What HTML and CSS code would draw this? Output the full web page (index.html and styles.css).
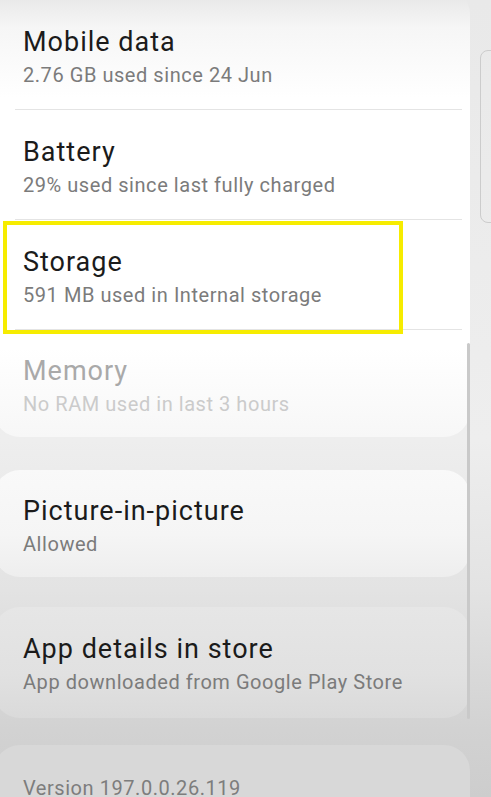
FILE: index.html
```html
<!DOCTYPE html>
<html lang="en">
<head>
<meta charset="utf-8">
<title>App info</title>
<link rel="stylesheet" href="styles.css">
</head>
<body>
<div class="screen">
  <div class="list">
    <section class="card card-main">
      <div class="row divided">
        <div class="title">Mobile data</div>
        <div class="sub">2.76 GB used since 24 Jun</div>
      </div>
      <div class="row divided">
        <div class="title">Battery</div>
        <div class="sub">29% used since last fully charged</div>
      </div>
      <div class="row divided">
        <div class="title">Storage</div>
        <div class="sub">591 MB used in Internal storage</div>
      </div>
      <div class="row row-last disabled">
        <div class="title">Memory</div>
        <div class="sub">No RAM used in last 3 hours</div>
      </div>
    </section>
    <section class="card card-pip">
      <div class="row">
        <div class="title">Picture-in-picture</div>
        <div class="sub">Allowed</div>
      </div>
    </section>
    <section class="card card-store">
      <div class="row">
        <div class="title">App details in store</div>
        <div class="sub">App downloaded from Google Play Store</div>
      </div>
    </section>
    <section class="card card-version">
      <div class="version">Version 197.0.0.26.119</div>
    </section>
  </div>
  <div class="highlight"></div>
  <div class="scrollbar"></div>
  <div class="edge"></div>
</div>
</body>
</html>
```
FILE: styles.css
```css
html, body {
  margin: 0;
  padding: 0;
}
body {
  width: 491px;
  height: 797px;
  overflow: hidden;
  font-family: Roboto, "Noto Sans", "Liberation Sans", sans-serif;
  background: linear-gradient(180deg, #e9e9e9 0px, #eeeeee 440px, #e3e3e3 590px, #d2d2d2 730px, #cdcdcd 797px);
}
.screen {
  position: relative;
  width: 491px;
  height: 797px;
  overflow: hidden;
}
.list {
  display: flex;
  flex-direction: column;
  width: 476px;
  margin-left: -6px;
}
.card {
  border-radius: 26px;
  box-sizing: border-box;
}
.card-main {
  margin-top: -12px;
  padding-top: 12px;
  background: linear-gradient(180deg, #e4e4e4 0px, #f6f6f6 40px, #ffffff 110px, #ffffff 360px, #f7f7f7 449px);
}
.card-pip {
  margin-top: 33px;
  height: 107px;
  background: linear-gradient(180deg, #f9f9f9 0%, #f5f5f5 60%, #eeeeee 100%);
}
.card-store {
  margin-top: 30px;
  height: 111px;
  background: linear-gradient(180deg, #e6e6e6 0%, #e1e1e1 60%, #dadada 100%);
}
.card-version {
  margin-top: 27px;
  height: 80px;
  background: #d8d8d8;
}
.row {
  position: relative;
  box-sizing: border-box;
  height: 110px;
  padding: 27px 0 0 29px;
}
.row-last {
  height: 107px;
  padding-top: 26px;
}
.card-pip .row {
  height: 107px;
  padding-top: 26px;
}
.card-store .row {
  height: 111px;
  padding-top: 27px;
}
.divided::after {
  content: "";
  position: absolute;
  left: 21px;
  right: 8px;
  bottom: 0;
  height: 1px;
  background: #e4e4e4;
}
.title {
  font-size: 27px;
  line-height: 30px;
  letter-spacing: 1px;
  color: #1b1b1b;
  white-space: nowrap;
}
.sub {
  margin-top: 6px;
  font-size: 20px;
  line-height: 24px;
  letter-spacing: 0.55px;
  color: #7b7b7b;
  white-space: nowrap;
}
.disabled .title {
  color: #a9a9a9;
}
.disabled .sub {
  color: #cbcbcb;
}
.version {
  padding: 31px 0 0 29px;
  font-size: 20px;
  line-height: 24px;
  letter-spacing: 0.55px;
  color: #7d7d7d;
  white-space: nowrap;
}
.highlight {
  position: absolute;
  left: 3px;
  top: 221px;
  width: 400px;
  height: 113px;
  box-sizing: border-box;
  border: 4.5px solid #f6ec00;
}
.scrollbar {
  position: absolute;
  left: 467px;
  top: 343px;
  width: 3px;
  height: 376px;
  border-radius: 2px;
  background: #c9c9c9;
}
.edge {
  position: absolute;
  left: 480px;
  top: 50px;
  width: 30px;
  height: 173px;
  box-sizing: border-box;
  border: 1px solid #cccccc;
  border-radius: 8px;
}
```
